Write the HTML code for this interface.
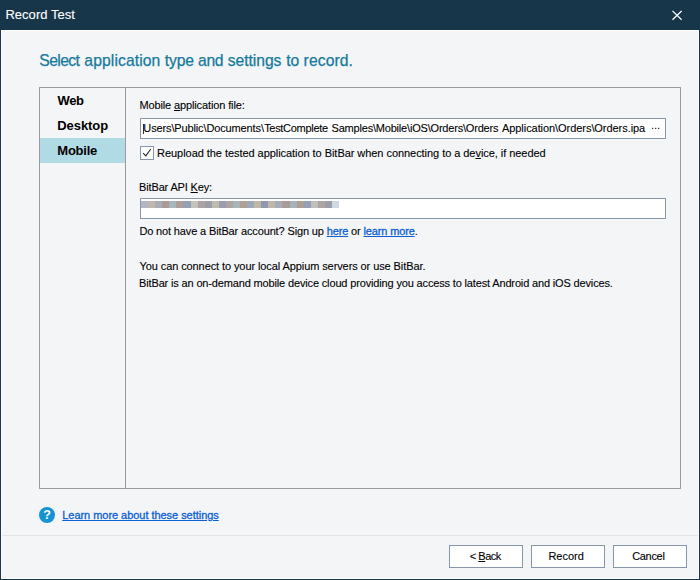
<!DOCTYPE html>
<html>
<head>
<meta charset="utf-8">
<style>
html,body{margin:0;padding:0;}
body{width:700px;height:580px;overflow:hidden;background:#f4f5f7;font-family:"Liberation Sans",sans-serif;font-size:11px;color:#000;position:relative;}
.abs{position:absolute;white-space:nowrap;}
.t{line-height:1.2;-webkit-text-stroke:0.1px currentColor;}
#title{left:0;top:0;width:700px;height:30px;background:#18364a;}
#bl{left:0;top:30px;width:1px;height:550px;background:#18364a;}
#br{left:699px;top:30px;width:1px;height:550px;background:#18364a;}
#bb{left:0;top:579px;width:700px;height:1px;background:#18364a;}
#panel{left:39px;top:87px;width:642px;height:402px;border:1px solid #9a9a9a;box-sizing:border-box;}
#divider{left:125px;top:88px;width:1px;height:400px;background:#9a9a9a;}
#sel{left:40px;top:138px;width:85px;height:25px;background:#b0dbe4;}
.inp{background:#fff;border:1px solid #8796ab;box-sizing:border-box;}
a{color:#0a60d4;text-decoration:underline;-webkit-text-stroke:0.3px #0a60d4;}
u{text-decoration:underline;}
.btn{background:#fff;border:1px solid #8796ab;box-sizing:border-box;width:74px;height:23px;top:545px;}
#sep{left:2px;top:535px;width:696px;height:1px;background:#e2e3e6;}
</style>
</head>
<body>
<div class="abs" id="title">
<svg class="abs" style="left:672px;top:10px" width="10" height="11" viewBox="0 0 10 11"><path d="M0.5 0.9 L9.6 9.7 M9.6 0.9 L0.5 9.7" stroke="#fff" stroke-width="1.3" fill="none"/></svg>
</div>
<div class="abs" id="bl"></div><div class="abs" id="br"></div><div class="abs" id="bb"></div>
<div class="abs" style="left:1px;top:30px;width:698px;height:549px;border:1px solid #fff;box-sizing:border-box;"></div>
<div class="abs" id="panel"></div>
<div class="abs" id="divider"></div>
<div class="abs" id="sel"></div>
<div class="abs inp" style="left:140px;top:118px;width:526px;height:21px;"></div>
<div class="abs" style="left:143px;top:124px;width:1px;height:10px;background:#333"></div>
<div class="abs inp" style="left:140px;top:146px;width:14px;height:14px;"></div>
<svg class="abs" style="left:140px;top:146px" width="14" height="14" viewBox="0 0 14 14"><path d="M3.2 7.2 L5.8 9.8 L10.8 3" stroke="#222" stroke-width="1.1" fill="none"/></svg>
<div class="abs inp" style="left:140px;top:198px;width:526px;height:21px;"></div>
<div class="abs" style="left:39px;top:507px;width:16px;height:16px;border-radius:8px;background:#1493d4;"></div>
<div class="abs" id="sep"></div>
<div class="abs btn" style="left:449px"></div>
<div class="abs btn" style="left:531px"></div>
<div class="abs btn" style="left:613px"></div>
<svg class="abs" style="left:141px;top:201px" width="198" height="7" viewBox="0 0 198 7" shape-rendering="crispEdges"><rect x="0.00" y="0" width="7.12" height="7" fill="#b3b4c4"/><rect x="7.07" y="0" width="7.12" height="7" fill="#c2b7ae"/><rect x="14.14" y="0" width="7.12" height="7" fill="#a9adb8"/><rect x="21.21" y="0" width="7.12" height="7" fill="#ad9a94"/><rect x="28.29" y="0" width="7.12" height="7" fill="#a8b7be"/><rect x="35.36" y="0" width="7.12" height="7" fill="#b09f99"/><rect x="42.43" y="0" width="7.12" height="7" fill="#95a0b6"/><rect x="49.50" y="0" width="7.12" height="7" fill="#c3c3bb"/><rect x="56.57" y="0" width="7.12" height="7" fill="#aea2a4"/><rect x="63.64" y="0" width="7.12" height="7" fill="#9c9ea9"/><rect x="70.71" y="0" width="7.12" height="7" fill="#bdbcad"/><rect x="77.79" y="0" width="7.12" height="7" fill="#9a9eb0"/><rect x="84.86" y="0" width="7.12" height="7" fill="#b0a4a2"/><rect x="91.93" y="0" width="7.12" height="7" fill="#a9b5bc"/><rect x="99.00" y="0" width="7.12" height="7" fill="#b09f96"/><rect x="106.07" y="0" width="7.12" height="7" fill="#9aaabb"/><rect x="113.14" y="0" width="7.12" height="7" fill="#c4b6a4"/><rect x="120.21" y="0" width="7.12" height="7" fill="#8f97b3"/><rect x="127.29" y="0" width="7.12" height="7" fill="#c0b6aa"/><rect x="134.36" y="0" width="7.12" height="7" fill="#a7adb8"/><rect x="141.43" y="0" width="7.12" height="7" fill="#a99b95"/><rect x="148.50" y="0" width="7.12" height="7" fill="#a5b3ba"/><rect x="155.57" y="0" width="7.12" height="7" fill="#ad9f98"/><rect x="162.64" y="0" width="7.12" height="7" fill="#969fb5"/><rect x="169.71" y="0" width="7.12" height="7" fill="#bfbfb9"/><rect x="176.79" y="0" width="7.12" height="7" fill="#ada3a1"/><rect x="183.86" y="0" width="7.12" height="7" fill="#9b9da8"/><rect x="190.93" y="0" width="7.12" height="7" fill="#cdd8e2"/></svg>
<svg class="abs" style="left:651px;top:126px" width="10" height="5" viewBox="0 0 10 5"><rect x="1.1" y="1.8" width="1.2" height="1.2" fill="#222"/><rect x="4.1" y="1.8" width="1.2" height="1.2" fill="#222"/><rect x="7.1" y="1.8" width="1.2" height="1.2" fill="#222"/></svg>
<div class="abs" style="left:39px;top:507px;width:16px;height:16px;color:#fff;font-weight:bold;font-size:12.5px;line-height:16px;text-align:center;">?</div>
<div class="abs t" id="t_title" style="left:5.39px;top:6.70px;font-size:13px;letter-spacing:0.042px;color:#fff;">Record Test</div>
<div class="abs t" id="t_h0" style="left:39.28px;top:51.75px;font-size:15.7px;letter-spacing:-0.584px;color:#147a9b;-webkit-text-stroke:0.25px currentColor;">Select</div>
<div class="abs t" id="t_h1" style="left:84.37px;top:51.75px;font-size:15.7px;letter-spacing:0.091px;color:#147a9b;-webkit-text-stroke:0.25px currentColor;">application</div>
<div class="abs t" id="t_h2" style="left:164.74px;top:51.75px;font-size:15.7px;letter-spacing:-0.117px;color:#147a9b;-webkit-text-stroke:0.25px currentColor;">type</div>
<div class="abs t" id="t_h3" style="left:198.09px;top:51.75px;font-size:15.7px;letter-spacing:-0.355px;color:#147a9b;-webkit-text-stroke:0.25px currentColor;">and</div>
<div class="abs t" id="t_h4" style="left:227.65px;top:51.75px;font-size:15.7px;letter-spacing:-0.039px;color:#147a9b;-webkit-text-stroke:0.25px currentColor;">settings</div>
<div class="abs t" id="t_h5" style="left:286.13px;top:51.75px;font-size:15.7px;letter-spacing:-0.070px;color:#147a9b;-webkit-text-stroke:0.25px currentColor;">to</div>
<div class="abs t" id="t_h6" style="left:303.58px;top:51.75px;font-size:15.7px;letter-spacing:0.090px;color:#147a9b;-webkit-text-stroke:0.25px currentColor;">record.</div>
<div class="abs t" id="t_web" style="left:57.57px;top:92.70px;font-size:13px;letter-spacing:-0.395px;font-weight:bold;-webkit-text-stroke:0px currentColor;">Web</div>
<div class="abs t" id="t_desk" style="left:57.24px;top:117.50px;font-size:13px;letter-spacing:-0.057px;font-weight:bold;-webkit-text-stroke:0px currentColor;">Desktop</div>
<div class="abs t" id="t_mob" style="left:57.35px;top:142.50px;font-size:13px;letter-spacing:-0.254px;font-weight:bold;-webkit-text-stroke:0px currentColor;">Mobile</div>
<div class="abs t" id="t_l1" style="left:139.40px;top:99.00px;font-size:11px;letter-spacing:-0.125px;">Mobile <u>a</u>pplication file:</div>
<div class="abs t" id="t_p0" style="left:143.32px;top:122.00px;font-size:11px;letter-spacing:-0.130px;">Users\Public\Documents\</div>
<div class="abs t" id="t_p1" style="left:264.18px;top:122.00px;font-size:11px;letter-spacing:-0.306px;">TestComplete</div>
<div class="abs t" id="t_p2" style="left:331.53px;top:122.00px;font-size:11px;letter-spacing:-0.195px;">Samples\Mobile\iOS\Orders\Orders</div>
<div class="abs t" id="t_p3" style="left:501.97px;top:122.00px;font-size:11px;letter-spacing:-0.060px;">Application\Orders\Orders.ipa</div>
<div class="abs t" id="t_chk" style="left:157.09px;top:147.00px;font-size:11px;letter-spacing:-0.051px;">Reupload the tested application to BitBar when connecting to a de<u>v</u>ice, if needed</div>
<div class="abs t" id="t_l2" style="left:139.09px;top:181.25px;font-size:11px;letter-spacing:-0.155px;">BitBar API <u>K</u>ey:</div>
<div class="abs t" id="t_l3" style="left:139.38px;top:225.00px;font-size:11px;letter-spacing:-0.140px;">Do not have a BitBar account? Sign up <a>here</a> or <a>learn more</a>.</div>
<div class="abs t" id="t_l4" style="left:139.47px;top:260.00px;font-size:11px;letter-spacing:-0.091px;">You can connect to your local Appium servers or use BitBar.</div>
<div class="abs t" id="t_l5" style="left:139.09px;top:277.00px;font-size:11px;letter-spacing:-0.152px;">BitBar is an on-demand mobile device cloud providing you access to latest Android and iOS devices.</div>
<div class="abs t" id="t_link" style="left:62.25px;top:509.00px;font-size:11px;letter-spacing:-0.041px;color:#1464d2;"><a>Learn more about these settings</a></div>
<div class="abs t" id="t_back" style="left:469.70px;top:550.00px;font-size:11px;letter-spacing:-0.452px;">&lt; <u>B</u>ack</div>
<div class="abs t" id="t_rec" style="left:548.46px;top:550.00px;font-size:11px;letter-spacing:-0.030px;">Record</div>
<div class="abs t" id="t_can" style="left:632.16px;top:550.00px;font-size:11px;letter-spacing:-0.314px;">Cancel</div>
</body>
</html>
